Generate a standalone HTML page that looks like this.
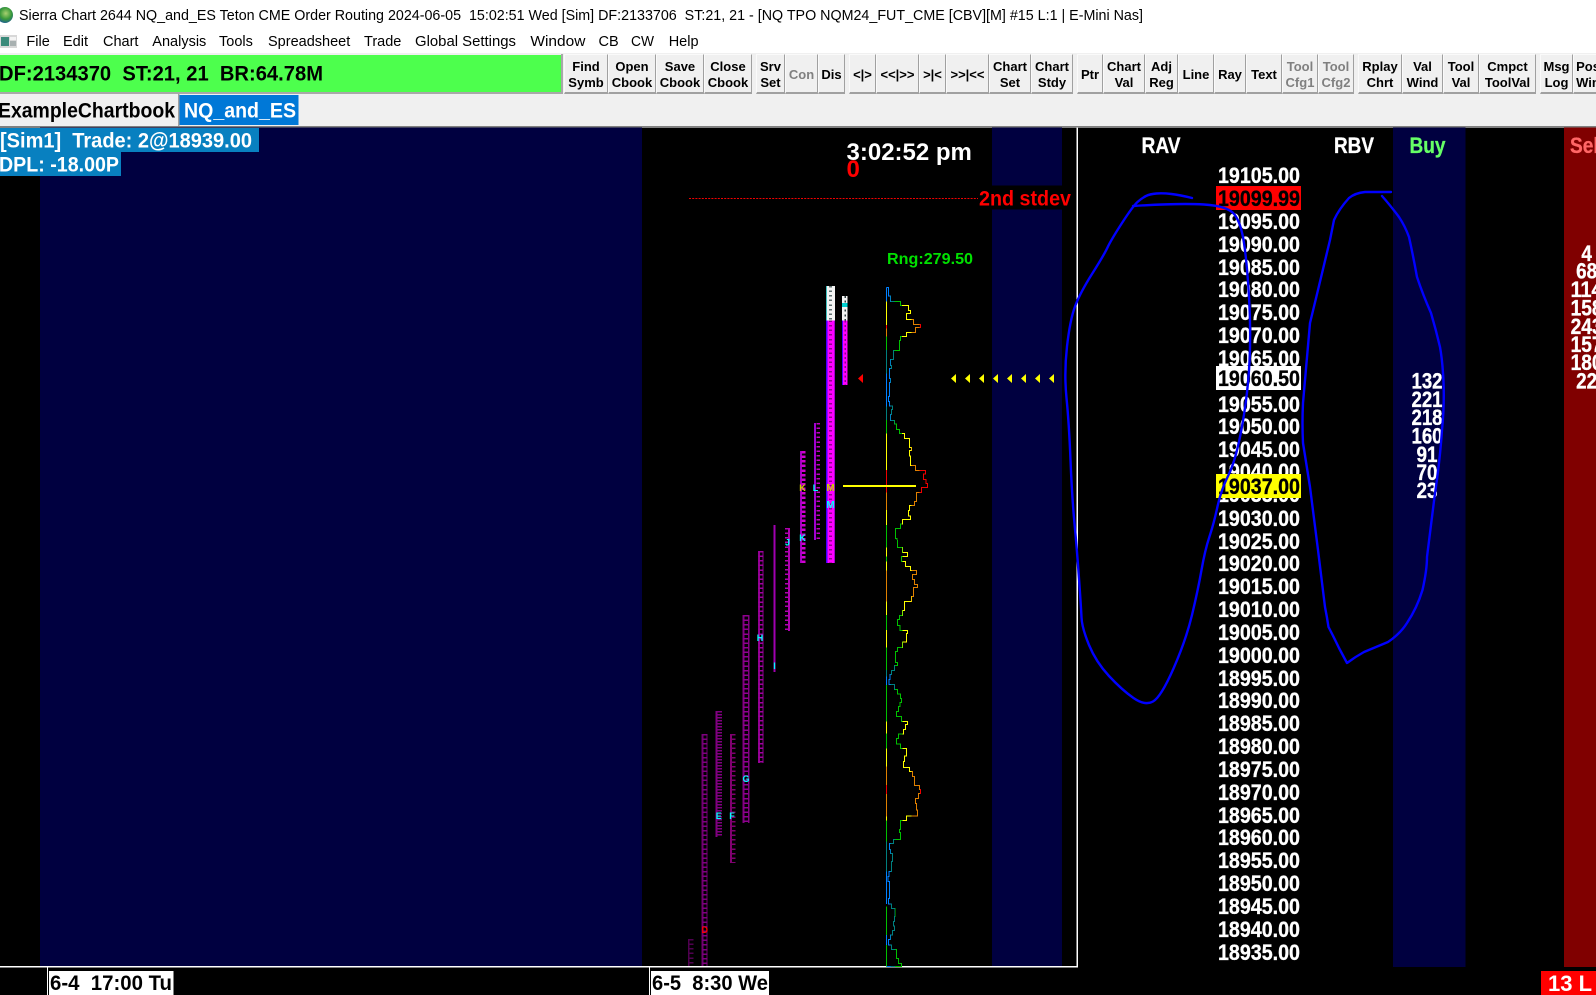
<!DOCTYPE html>
<html><head><meta charset="utf-8">
<style>
html,body{margin:0;padding:0;background:#000;width:1596px;height:995px;overflow:hidden}
body{position:relative;font-family:"Liberation Sans",Arial,sans-serif}
#top{position:absolute;left:0;top:0;width:1596px;height:53px;background:#fff}
#bar{position:absolute;left:0;top:53px;width:1596px;height:73px;background:#f0f0f0}
#sep{position:absolute;left:0;top:126px;width:1596px;height:1.5px;background:#808080}
.b{position:absolute;top:54px;height:40px;box-sizing:border-box;padding-top:3px;background:#f0f0f0;border-right:1px solid #a0a0a0;border-bottom:2px solid #a0a0a0;border-left:1px solid #fafafa;border-top:1px solid #fafafa;font-weight:bold;font-size:13px;line-height:16px;color:#000;text-align:center;display:flex;align-items:center;justify-content:center;white-space:nowrap;overflow:hidden}
.d{color:#808080}
svg{position:absolute;left:0;top:0}
</style></head><body>
<div id="top"></div><div id="bar"></div><div id="sep"></div>
<div class="b" style="left:564px;width:44px">Find<br>Symb</div>
<div class="b" style="left:608px;width:48px">Open<br>Cbook</div>
<div class="b" style="left:656px;width:48px">Save<br>Cbook</div>
<div class="b" style="left:704px;width:48px">Close<br>Cbook</div>
<div class="b" style="left:756px;width:29px">Srv<br>Set</div>
<div class="b d" style="left:785px;width:33px">Con</div>
<div class="b" style="left:818px;width:27px">Dis</div>
<div class="b" style="left:849px;width:27px">&lt;|&gt;</div>
<div class="b" style="left:876px;width:43px">&lt;&lt;|&gt;&gt;</div>
<div class="b" style="left:919px;width:27px">&gt;|&lt;</div>
<div class="b" style="left:946px;width:43px">&gt;&gt;|&lt;&lt;</div>
<div class="b" style="left:989px;width:42px">Chart<br>Set</div>
<div class="b" style="left:1031px;width:42px">Chart<br>Stdy</div>
<div class="b" style="left:1077px;width:26px">Ptr</div>
<div class="b" style="left:1103px;width:42px">Chart<br>Val</div>
<div class="b" style="left:1145px;width:33px">Adj<br>Reg</div>
<div class="b" style="left:1178px;width:36px">Line</div>
<div class="b" style="left:1214px;width:32px">Ray</div>
<div class="b" style="left:1246px;width:36px">Text</div>
<div class="b d" style="left:1282px;width:36px">Tool<br>Cfg1</div>
<div class="b d" style="left:1318px;width:36px">Tool<br>Cfg2</div>
<div class="b" style="left:1358px;width:44px">Rplay<br>Chrt</div>
<div class="b" style="left:1402px;width:41px">Val<br>Wind</div>
<div class="b" style="left:1443px;width:36px">Tool<br>Val</div>
<div class="b" style="left:1479px;width:57px">Cmpct<br>ToolVal</div>
<div class="b" style="left:1540px;width:33px">Msg<br>Log</div>
<div class="b" style="left:1573px;width:30px">Pos<br>Win</div>

<svg width="1596" height="995" viewBox="0 0 1596 995" font-family="'Liberation Sans',Arial,sans-serif">
<defs>
<radialGradient id="gl" cx=".55" cy=".4" r=".65"><stop offset="0" stop-color="#a8d070"/><stop offset=".55" stop-color="#3a9a3a"/><stop offset="1" stop-color="#1c5a9a"/></radialGradient>
<linearGradient id="g1" gradientUnits="userSpaceOnUse" x1="319" y1="0" x2="469" y2="0">
<stop offset="0" stop-color="#0080ff"/><stop offset=".08" stop-color="#0080ff"/><stop offset=".08" stop-color="#008080"/><stop offset=".167" stop-color="#008080"/><stop offset=".167" stop-color="#00c000"/><stop offset=".313" stop-color="#00c000"/><stop offset=".313" stop-color="#ffff00"/><stop offset=".5" stop-color="#ffff00"/><stop offset=".5" stop-color="#e08000"/><stop offset=".667" stop-color="#e08000"/><stop offset=".667" stop-color="#f00000"/><stop offset="1" stop-color="#f00000"/>
</linearGradient>
<linearGradient id="g2" href="#g1" gradientUnits="userSpaceOnUse" x1="620" y1="0" x2="770" y2="0"/>
</defs>

<!-- title + menu -->
<circle cx="5" cy="15" r="8" fill="url(#gl)"/>
<text x="19" y="20" font-size="14.5" fill="#000" textLength="1124" lengthAdjust="spacingAndGlyphs">Sierra Chart 2644 NQ_and_ES Teton CME Order Routing 2024-06-05&#160; 15:02:51 Wed [Sim] DF:2133706&#160; ST:21, 21 - [NQ TPO NQM24_FUT_CME [CBV][M] #15 L:1 | E-Mini Nas]</text>
<rect x="0" y="35" width="17" height="13" fill="#d8d8d8"/><rect x="1" y="37" width="8" height="9" fill="#3a8a7a"/><rect x="10" y="37" width="6" height="3" fill="#f4f4f4"/><rect x="10" y="41" width="6" height="5" fill="#a8b0b0"/>
<g font-size="14.5" fill="#000">
<text x="26.4" y="46">File</text><text x="63" y="46">Edit</text><text x="103" y="46">Chart</text><text x="152.3" y="46">Analysis</text><text x="219" y="46">Tools</text><text x="268" y="46">Spreadsheet</text><text x="364" y="46">Trade</text><text x="415" y="46" textLength="101" lengthAdjust="spacingAndGlyphs">Global Settings</text><text x="530.4" y="46" textLength="55" lengthAdjust="spacingAndGlyphs">Window</text><text x="598.5" y="46">CB</text><text x="631" y="46" textLength="23" lengthAdjust="spacingAndGlyphs">CW</text><text x="668.7" y="46">Help</text>
</g>

<!-- green status -->
<rect x="0" y="55" width="561" height="37" fill="#4dff4d"/>
<rect x="561" y="54" width="2" height="39" fill="#a8a8a8"/>
<rect x="0" y="92" width="563" height="2" fill="#a8a8a8"/>
<text x="-1" y="80.5" font-size="21" font-weight="bold" fill="#000" textLength="324" lengthAdjust="spacingAndGlyphs">DF:2134370&#160; ST:21, 21&#160; BR:64.78M</text>

<!-- tabs -->
<text x="-2" y="117.5" font-size="21" font-weight="bold" fill="#000" textLength="177" lengthAdjust="spacingAndGlyphs">ExampleChartbook</text>
<rect x="178" y="94" width="1.5" height="32" fill="#a0a0a0"/>
<rect x="179.5" y="95" width="119" height="30" fill="#0078d7"/>
<text x="184" y="117.5" font-size="21" font-weight="bold" fill="#fff" textLength="112" lengthAdjust="spacingAndGlyphs">NQ_and_ES</text>

<!-- chart bg -->
<rect x="40" y="127.5" width="602" height="839.5" fill="#000040"/>
<rect x="992" y="127.5" width="70" height="839.5" fill="#000040"/>
<rect x="1393" y="127.5" width="72.5" height="839.5" fill="#000040"/>
<rect x="1564" y="127.5" width="32" height="839.5" fill="#800000"/>
<rect x="1076.5" y="127.5" width="1.5" height="840" fill="#fff"/>
<rect x="0" y="966" width="1078" height="1.5" fill="#fff"/>

<!-- sim info -->
<rect x="0" y="128" width="259" height="24" fill="#0880c0"/>
<rect x="0" y="152" width="121" height="24" fill="#0880c0"/>
<text x="0" y="147.5" font-size="21" font-weight="bold" fill="#fff" textLength="252" lengthAdjust="spacingAndGlyphs">[Sim1]&#160; Trade: 2@18939.00</text>
<text x="-1" y="171.5" font-size="21" font-weight="bold" fill="#fff" textLength="120" lengthAdjust="spacingAndGlyphs">DPL: -18.00P</text>

<!-- clock etc -->
<text x="846.5" y="160" font-size="24" font-weight="bold" fill="#fff">3:02:52 pm</text>
<text x="846.5" y="177" font-size="24" font-weight="bold" fill="#ff0000">0</text>
<line x1="689" y1="198.5" x2="978" y2="198.5" stroke="#f00000" stroke-width="1" stroke-dasharray="2 1.2"/>
<rect x="978" y="185.5" width="93" height="24" fill="#000"/>
<text x="979" y="205.5" font-size="21" font-weight="bold" fill="#ff0000" textLength="92" lengthAdjust="spacingAndGlyphs">2nd stdev</text>
<text x="887" y="264" font-size="16" font-weight="bold" fill="#00e000" textLength="86" lengthAdjust="spacingAndGlyphs">Rng:279.50</text>

<!-- TPO columns -->
<g fill="none" shape-rendering="crispEdges">
<line x1="688.5" y1="939" x2="688.5" y2="966" stroke="#500050" stroke-width="1.5"/><line x1="691" y1="939" x2="691" y2="966" stroke="#500050" stroke-width="5" stroke-dasharray="1.5 3.07"/>
<line x1="702.5" y1="734" x2="702.5" y2="966" stroke="#700070" stroke-width="2"/><line x1="707" y1="734" x2="707" y2="966" stroke="#700070" stroke-width="1"/><line x1="705" y1="734" x2="705" y2="966" stroke="#800080" stroke-width="5" stroke-dasharray="1.5 3.07"/>
<line x1="716.5" y1="711" x2="716.5" y2="837" stroke="#800080" stroke-width="2"/><line x1="719.5" y1="711" x2="719.5" y2="837" stroke="#800080" stroke-width="4.5" stroke-dasharray="1.5 1.5"/>
<line x1="731" y1="734" x2="731" y2="863" stroke="#800070" stroke-width="2"/><line x1="733.5" y1="734" x2="733.5" y2="863" stroke="#800070" stroke-width="3.5" stroke-dasharray="1.5 3.07"/>
<line x1="743.5" y1="615" x2="743.5" y2="823" stroke="#800080" stroke-width="2"/><line x1="748.5" y1="615" x2="748.5" y2="823" stroke="#800080" stroke-width="1.5"/><line x1="746" y1="615" x2="746" y2="823" stroke="#900090" stroke-width="5" stroke-dasharray="1.5 3.07"/>
<line x1="759" y1="551" x2="759" y2="763" stroke="#900090" stroke-width="2"/><line x1="763" y1="551" x2="763" y2="763" stroke="#900090" stroke-width="1"/><line x1="761" y1="551" x2="761" y2="763" stroke="#a000a0" stroke-width="5" stroke-dasharray="1.5 3.07"/>
<line x1="774.7" y1="525" x2="774.7" y2="672" stroke="#a000b0" stroke-width="2"/>
<line x1="789" y1="528" x2="789" y2="631" stroke="#b000b0" stroke-width="2"/><line x1="786.5" y1="528" x2="786.5" y2="631" stroke="#b000b0" stroke-width="3.5" stroke-dasharray="1.5 3.07"/>
<line x1="801" y1="451" x2="801" y2="563" stroke="#a000c0" stroke-width="2"/><line x1="803.5" y1="451" x2="803.5" y2="563" stroke="#d000d0" stroke-width="4" stroke-dasharray="2.5 2.07"/>
<line x1="815" y1="423" x2="815" y2="540" stroke="#a000d0" stroke-width="2"/><line x1="818" y1="423" x2="818" y2="540" stroke="#c000c0" stroke-width="3.5" stroke-dasharray="1.5 3.07"/>
<rect x="826" y="320.5" width="9" height="242.5" fill="#ff00ff"/>
<rect x="826" y="320.5" width="1.5" height="242.5" fill="#4000ff"/>
<rect x="834" y="320.5" width="1" height="242.5" fill="#a000d0"/>
<line x1="830.5" y1="320.5" x2="830.5" y2="563" stroke="#900090" stroke-width="3" stroke-dasharray="1.5 3.07"/>
<rect x="826" y="286" width="9" height="34.5" fill="#f4f4f4"/>
<rect x="826" y="286" width="1" height="34.5" fill="#40c0c0"/>
<line x1="830.5" y1="286" x2="830.5" y2="320.5" stroke="#607070" stroke-width="3" stroke-dasharray="1.5 3.07"/>
<rect x="842" y="320.5" width="5.5" height="64.5" fill="#ff00ff"/>
<rect x="842" y="320.5" width="1" height="64.5" fill="#4000ff"/>
<line x1="845" y1="320.5" x2="845" y2="385" stroke="#900090" stroke-width="1.5" stroke-dasharray="2 2.57"/>
<rect x="842" y="296" width="5.5" height="24.5" fill="#f4f4f4"/>
<line x1="845" y1="296" x2="845" y2="320.5" stroke="#304040" stroke-width="1.5" stroke-dasharray="2 2.57"/>
<rect x="842" y="303" width="5.5" height="4" fill="#00d0d0"/>
</g>
<g font-size="9" font-weight="bold" text-anchor="middle" fill="#00ffff">
<text x="718.7" y="819">E</text><text x="732" y="819">F</text><text x="746" y="782">G</text><text x="760" y="641">H</text><text x="774.5" y="669">I</text><text x="787.5" y="545.5">J</text><text x="802.5" y="541">K</text><text x="815.5" y="491">L</text><text x="830.5" y="508" font-size="10">M</text><text x="704.8" y="933" fill="#ff0000">D</text><text x="802.5" y="491" fill="#d0d000">K</text><text x="830.5" y="491" fill="#d0d000" font-size="10">M</text>
</g>

<!-- arrows -->
<path d="M858 378.5L863 374V383Z" fill="#ff0000"/>
<g fill="#ffff00"><path d="M951 378.5L956 374V383Z"/><path d="M965 378.5L970 374V383Z"/><path d="M979 378.5L984 374V383Z"/><path d="M993 378.5L998 374V383Z"/><path d="M1007 378.5L1012 374V383Z"/><path d="M1021 378.5L1026 374V383Z"/><path d="M1035 378.5L1040 374V383Z"/><path d="M1049 378.5L1054 374V383Z"/></g>

<!-- volume profile upper -->
<g transform="translate(780,270) scale(.33333)" fill="none" stroke-width="3" shape-rendering="crispEdges">
<path stroke="url(#g1)" d="M319 52H325V78H331V95H361V106H385V122H392V130H379V148H400V163H422V172H406V187H379V199H361V212H358V241H340V268H331V287H335V295H328V325H331V338H328V380H325V395H329V408H338V418H334V433H331V451H343V462H349V478H358V490H373V505H388V532H395V542H388V558H391V586H406V601H437V612H430V628H438V641H443V653H424V667H409V694H403V706H388V722H385V738H392V748H367V762H361V775H346V805H351V810"/>
<path stroke="#0080ff" d="M319 52V95M319 310V410"/>
<path stroke="#008080" d="M319 240V310M319 410V450"/>
<path stroke="#00c000" d="M319 200V240M319 450V490M319 765V810"/>
<path stroke="#ffff00" d="M319 95V165M319 490V600M319 720V765"/>
<path stroke="#f00000" d="M319 165V175M319 600V668"/>
<path stroke="#e08000" d="M319 175V200M319 668V720"/>
</g>
<!-- volume profile lower -->
<g transform="translate(680,540) scale(.33333)" fill="none" stroke-width="3" shape-rendering="crispEdges">
<path stroke="url(#g2)" d="M652 0V22H667V37H683V50H664V65H676V80H692V92H710V103H698V118H703V133H713V143H701V170H695V184H673V212H667V226H658V238H652V256H660V272H683V280H680V306H667V322H652V334H646V368H652V376H643V392H634V404H630V418H627V433H643V448H652V462H661V475H664V488H660V500H656V515H649V529H664V545H683V553H676V568H670V582H655V596H649V612H661V626H680V648H673V664H670V682H689V694H698V709H703V736H718V748H722V761H715V775H706V790H709V810H712V828H680V842H661V868H658V878H661V898H640V910H628V928H632V940H637V965H634V995H627V1010H624V1025H628V1075H625V1092H634V1105H645V1130H643V1145H640V1158H643V1172H637V1185H632V1198H625V1215H634V1228H649V1255H655V1270H664V1279H620"/>
<path stroke="#00c000" d="M619.5 0V22M619.5 50V65M619.5 225V270M619.5 322V390M619.5 435V545M619.5 580V625M619.5 842V905M619.5 1100V1185M619.5 1215V1279"/>
<path stroke="#ffff00" d="M619.5 22V50M619.5 65V92M619.5 185V225M619.5 270V322M619.5 545V580M619.5 625V680M619.5 830V842"/>
<path stroke="#e08000" d="M619.5 92V185M619.5 680V735M619.5 762V830"/>
<path stroke="#f00000" d="M619.5 735V762"/>
<path stroke="#008080" d="M619.5 390V410M619.5 905V995"/>
<path stroke="#0080ff" d="M619.5 410V435M619.5 995V1092M619.5 1185V1215"/>
</g>
<rect x="843" y="485" width="73" height="2" fill="#ffff00"/>

<!-- price scale -->
<g font-weight="bold" font-size="22" fill="#fff" stroke="#fff" stroke-width=".35">
<text x="1218" y="183" textLength="82" lengthAdjust="spacingAndGlyphs">19105.00</text>
<text x="1218" y="206" textLength="82" lengthAdjust="spacingAndGlyphs">19100.00</text>
<text x="1218" y="229" textLength="82" lengthAdjust="spacingAndGlyphs">19095.00</text>
<text x="1218" y="252" textLength="82" lengthAdjust="spacingAndGlyphs">19090.00</text>
<text x="1218" y="275" textLength="82" lengthAdjust="spacingAndGlyphs">19085.00</text>
<text x="1218" y="297" textLength="82" lengthAdjust="spacingAndGlyphs">19080.00</text>
<text x="1218" y="320" textLength="82" lengthAdjust="spacingAndGlyphs">19075.00</text>
<text x="1218" y="343" textLength="82" lengthAdjust="spacingAndGlyphs">19070.00</text>
<text x="1218" y="366" textLength="82" lengthAdjust="spacingAndGlyphs">19065.00</text>
<text x="1218" y="412" textLength="82" lengthAdjust="spacingAndGlyphs">19055.00</text>
<text x="1218" y="434" textLength="82" lengthAdjust="spacingAndGlyphs">19050.00</text>
<text x="1218" y="457" textLength="82" lengthAdjust="spacingAndGlyphs">19045.00</text>
<text x="1218" y="479" textLength="82" lengthAdjust="spacingAndGlyphs">19040.00</text>
<text x="1218" y="502" textLength="82" lengthAdjust="spacingAndGlyphs">19035.00</text>
<text x="1218" y="526" textLength="82" lengthAdjust="spacingAndGlyphs">19030.00</text>
<text x="1218" y="549" textLength="82" lengthAdjust="spacingAndGlyphs">19025.00</text>
<text x="1218" y="571" textLength="82" lengthAdjust="spacingAndGlyphs">19020.00</text>
<text x="1218" y="594" textLength="82" lengthAdjust="spacingAndGlyphs">19015.00</text>
<text x="1218" y="617" textLength="82" lengthAdjust="spacingAndGlyphs">19010.00</text>
<text x="1218" y="640" textLength="82" lengthAdjust="spacingAndGlyphs">19005.00</text>
<text x="1218" y="663" textLength="82" lengthAdjust="spacingAndGlyphs">19000.00</text>
<text x="1218" y="686" textLength="82" lengthAdjust="spacingAndGlyphs">18995.00</text>
<text x="1218" y="708" textLength="82" lengthAdjust="spacingAndGlyphs">18990.00</text>
<text x="1218" y="731" textLength="82" lengthAdjust="spacingAndGlyphs">18985.00</text>
<text x="1218" y="754" textLength="82" lengthAdjust="spacingAndGlyphs">18980.00</text>
<text x="1218" y="777" textLength="82" lengthAdjust="spacingAndGlyphs">18975.00</text>
<text x="1218" y="800" textLength="82" lengthAdjust="spacingAndGlyphs">18970.00</text>
<text x="1218" y="823" textLength="82" lengthAdjust="spacingAndGlyphs">18965.00</text>
<text x="1218" y="845" textLength="82" lengthAdjust="spacingAndGlyphs">18960.00</text>
<text x="1218" y="868" textLength="82" lengthAdjust="spacingAndGlyphs">18955.00</text>
<text x="1218" y="891" textLength="82" lengthAdjust="spacingAndGlyphs">18950.00</text>
<text x="1218" y="914" textLength="82" lengthAdjust="spacingAndGlyphs">18945.00</text>
<text x="1218" y="937" textLength="82" lengthAdjust="spacingAndGlyphs">18940.00</text>
<text x="1218" y="960" textLength="82" lengthAdjust="spacingAndGlyphs">18935.00</text>
</g>
<rect x="1216" y="186" width="85" height="24" fill="#ff0000"/>
<text x="1218" y="206" font-size="22" font-weight="bold" fill="#000" stroke="#000" stroke-width=".35" textLength="82" lengthAdjust="spacingAndGlyphs">19099.99</text>
<rect x="1216" y="366" width="85" height="24" fill="#fff"/>
<text x="1218" y="386" font-size="22" font-weight="bold" fill="#000" stroke="#000" stroke-width=".35" textLength="82" lengthAdjust="spacingAndGlyphs">19060.50</text>
<rect x="1216" y="474" width="85" height="24" fill="#ffff00"/>
<text x="1218" y="494" font-size="22" font-weight="bold" fill="#000" stroke="#000" stroke-width=".35" textLength="82" lengthAdjust="spacingAndGlyphs">19037.00</text>

<!-- headers -->
<g font-size="22" font-weight="bold" text-anchor="middle">
<text x="1161" y="153" fill="#fff" stroke="#fff" stroke-width=".3" textLength="39" lengthAdjust="spacingAndGlyphs">RAV</text>
<text x="1354" y="153" fill="#fff" stroke="#fff" stroke-width=".3" textLength="40" lengthAdjust="spacingAndGlyphs">RBV</text>
<text x="1427.5" y="153" fill="#66ff66" stroke="#66ff66" stroke-width=".3" textLength="36" lengthAdjust="spacingAndGlyphs">Buy</text>
<text x="1587" y="153" fill="#ff6666" stroke="#ff6666" stroke-width=".3" textLength="34" lengthAdjust="spacingAndGlyphs">Sell</text>
<g fill="#fff" stroke="#fff" stroke-width=".35">
<text x="1427" y="388.5" textLength="31" lengthAdjust="spacingAndGlyphs">132</text>
<text x="1427" y="407" textLength="31" lengthAdjust="spacingAndGlyphs">221</text>
<text x="1427" y="425" textLength="31" lengthAdjust="spacingAndGlyphs">218</text>
<text x="1427" y="443.5" textLength="31" lengthAdjust="spacingAndGlyphs">160</text>
<text x="1427" y="462" textLength="21" lengthAdjust="spacingAndGlyphs">91</text>
<text x="1427" y="480" textLength="21" lengthAdjust="spacingAndGlyphs">70</text>
<text x="1427" y="498" textLength="21" lengthAdjust="spacingAndGlyphs">23</text>
<text x="1586.6" y="261" textLength="10.5" lengthAdjust="spacingAndGlyphs">4</text>
<text x="1586.6" y="278.5" textLength="21" lengthAdjust="spacingAndGlyphs">68</text>
<text x="1586.6" y="297" textLength="32" lengthAdjust="spacingAndGlyphs">114</text>
<text x="1586.6" y="315.5" textLength="32" lengthAdjust="spacingAndGlyphs">158</text>
<text x="1586.6" y="334" textLength="32" lengthAdjust="spacingAndGlyphs">243</text>
<text x="1586.6" y="352" textLength="32" lengthAdjust="spacingAndGlyphs">157</text>
<text x="1586.6" y="370" textLength="32" lengthAdjust="spacingAndGlyphs">180</text>
<text x="1586.6" y="388.5" textLength="21" lengthAdjust="spacingAndGlyphs">22</text>
</g>
</g>

<!-- hand-drawn blue strokes -->
<g fill="none" stroke="#0000ff" stroke-width="2.4" stroke-linecap="round" stroke-linejoin="round">
<path d="M1192 198Q1180 195 1171.5 194Q1163 193 1156.5 193.5Q1150 194 1146 196Q1142 198 1137.5 202Q1133 206 1122 223Q1111 240 1107.5 247.5Q1104 255 1092 274Q1080 293 1075 306.5Q1070 320 1067 346.5Q1064 373 1066.5 398Q1069 423 1070.5 460Q1072 497 1074.5 523.5Q1077 550 1079 578.5Q1081 607 1081.5 617.5Q1082 628 1089 645Q1096 662 1109 676Q1122 690 1133.5 698Q1145 706 1153 701.5Q1161 697 1173.5 668.5Q1186 640 1192 615Q1198 590 1201.5 570Q1205 550 1209.5 536.5Q1214 523 1217.5 506.5Q1221 490 1228.5 475Q1236 460 1242 426.5Q1248 393 1249.5 361.5Q1251 330 1249 296.5Q1247 263 1244 243Q1241 223 1234.5 214.5Q1228 206 1204 204.5Q1180 203 1133 206"/>
<path d="M1391 192H1365Q1355 193 1349 198Q1339 209 1334 220Q1332 230 1330 240Q1324 265 1318 290Q1314 306.5 1310 323Q1306.5 363 1303 403Q1302 423 1303 443Q1306.5 465 1310 487Q1314 518.5 1318 550Q1321.5 578.5 1325 607Q1327 617 1328.5 627Q1334 637.5 1339 648L1347 663Q1355 657 1364 652Q1376 647 1388 642Q1400 634 1407 623Q1417 608 1422.5 590Q1427 570 1427 557Q1431 525 1434.5 497Q1440 460 1442 430Q1445 400 1443 373Q1442 358 1440 347Q1436 330 1431 313Q1423 295 1417 277Q1413 255 1409 237Q1405 226 1399 217Q1390 205 1382 196"/>
</g>

<!-- bottom axis -->
<rect x="47" y="967.5" width="1" height="27.5" fill="#fff"/>
<rect x="49" y="971" width="124.5" height="24" fill="#fff"/>
<text x="50" y="990" font-size="21" font-weight="bold" fill="#000" textLength="122" lengthAdjust="spacingAndGlyphs">6-4&#160; 17:00 Tu</text>
<rect x="649" y="967.5" width="1" height="27.5" fill="#fff"/>
<rect x="651" y="971" width="118" height="24" fill="#fff"/>
<text x="652" y="990" font-size="21" font-weight="bold" fill="#000" textLength="116" lengthAdjust="spacingAndGlyphs">6-5&#160; 8:30 We</text>
<rect x="1541" y="971" width="55" height="24" fill="#ff0000"/>
<text x="1548" y="991" font-size="22" font-weight="bold" fill="#fff">13 L F</text>
</svg>
</body></html>
